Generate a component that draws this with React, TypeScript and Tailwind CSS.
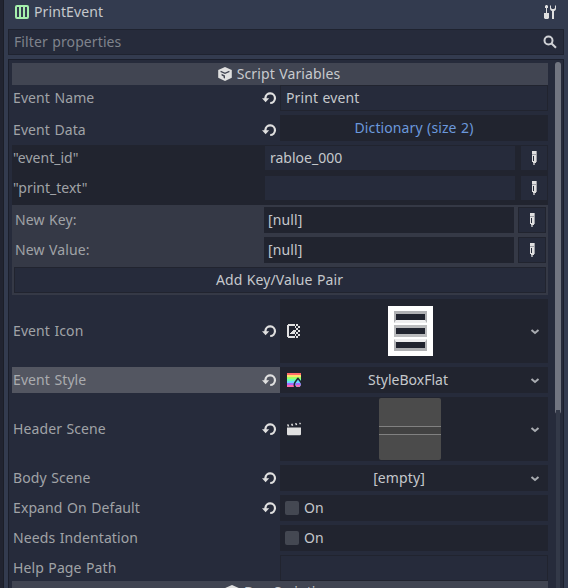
import type { ReactNode } from "react";

const ROW_LABEL = "flex h-[26px] shrink-0 items-center justify-between pl-px pr-[3px] text-[#a0a3a7]";

function Reset() {
  return (
    <svg width="16" height="16" viewBox="0 0 16 16" fill="none">
      <path d="M4.400 9V7.800a4.800 4.800 0 1 1 4.800 5.200" stroke="#e0e0e0" strokeWidth="2.200" />
      <path d="M1 8.300h7.200L4.600 12.300z" fill="#e0e0e0" />
    </svg>
  );
}

function Chevron() {
  return (
    <svg width="10" height="8" viewBox="0 0 10 8" fill="none" className="absolute right-2 top-1/2 -mt-[3px]">
      <path d="M1.500 2 5 5l3.500-3" stroke="#a9acb1" strokeWidth="2" />
    </svg>
  );
}

function Pencil() {
  return (
    <svg width="5" height="14" viewBox="0 0 5 14" shapeRendering="crispEdges">
      <path d="M0 0h4v3H0zM0 4h1v7H0zM2 4h2v7H2zM1 10h3v2H1zM1 4h1v1H1z" fill="#e0e0e0" />
      <path d="M0 3h4v1H0zM4 0h1v11H4zM1 12h2v2H1z" fill="#c4c6ca" opacity=".75" />
    </svg>
  );
}

function Cube() {
  return (
    <svg width="14" height="14" viewBox="0 0 14 14">
      <path d="M7 0 13.800 3v7.800L7 14 .200 10.800V3z" fill="#e0e0e0" />
      <path d="M2.600 4.300 7 6.300l4.400-2" fill="none" stroke="#414552" strokeWidth="1.300" />
      <path d="M3.600 6.800 7 8.400v3.200L5.600 11V9.500L3.600 8.500z" fill="#414552" />
    </svg>
  );
}

function TextureIcon() {
  return (
    <svg width="14" height="14" viewBox="0 0 14 14" shapeRendering="crispEdges" fill="#e0e0e0">
      <path d="M1 0h7v2H2v10h6v2H1v-1H0V1h1zM3 9h1V8h1V7h1V6h2v4H3zM8 2h1v2H8zM9 0h2v2H9zM11 2h2v2h-2zM9 4h2v2H9zM8 6h1v2H8zM11 6h2v2h-2zM9 8h2v2H9zM8 10h1v2H8zM11 10h2v2h-2zM9 12h2v2H9z" />
    </svg>
  );
}

function StyleIcon() {
  const bands = ["#ff6b6b", "#ffe46b", "#9bff6b", "#6bffb0", "#6bd9ff", "#a66bff", "#ff6bac"];
  return (
    <svg width="14" height="14" viewBox="0 0 14 14">
      {bands.map((color, i) => (
        <rect key={color} y={i * 2} width="14" height="2" fill={color} />
      ))}
      <path d="M7 14c-1.400-3 .500-6.200 4-9.800 1 1 2 2.300 3 3.800v6z" fill="#21242f" />
      <path d="M11 6.500c1.400 2 2.800 3.300 2.800 5a2.700 2.700 0 0 1-5.500 0c0-1.700 1.300-3 2.700-5z" fill="#6bd9ff" />
      <path d="M8.800 10h4.500l.500 2H8.400z" fill="#a66bff" />
      <path d="M8.500 12h5.200c-.500 1.400-1.400 2-2.700 2s-2.200-.700-2.500-2z" fill="#ff6bac" />
    </svg>
  );
}

function SceneIcon() {
  return (
    <svg width="14" height="13" viewBox="0 0 14 13" fill="#e0e0e0">
      <path d="M0 5h14v7l-1 1H1l-1-1zM0 2l1.500-.200L2.300 4H.700zM4 1.400 5.400 1l.900 2-1.500.400zM8 .800 9.400.500l.900 2-1.500.300zM12 .200l1.400-.200.600 1.600-1.200.300z" />
    </svg>
  );
}

function Header({ children }: { children: ReactNode }) {
  return (
    <div className="flex h-[22px] shrink-0 items-center justify-center gap-[5px] bg-[#414552] pr-0.5 text-[#c8cace]">
      <Cube />
      <span>{children}</span>
    </div>
  );
}

interface PropertyProps {
  label: string;
  reset?: boolean;
  highlighted?: boolean;
  tall?: boolean;
  children: ReactNode;
}

function Property({ label, reset, highlighted, tall, children }: PropertyProps) {
  return (
    <div className={`flex shrink-0 ${tall ? "h-16" : "h-[26px]"}`}>
      <div className={`flex w-[268px] items-center justify-between pl-px pr-[3px] ${highlighted ? "bg-[#535661] text-[#aaacaf]" : "text-[#a0a3a7]"}`}>
        <span>{label}</span>
        {reset && <Reset />}
      </div>
      {children}
    </div>
  );
}

function Picker({ icon, children, shift = "" }: { icon?: ReactNode; children: ReactNode; shift?: string }) {
  return (
    <div className="relative flex flex-1 items-center justify-center bg-[#21242f]">
      {icon && <span className="absolute left-[7px] top-1/2 -translate-y-1/2">{icon}</span>}
      <span className={shift}>{children}</span>
      <Chevron />
    </div>
  );
}

function Toggle() {
  return (
    <div className="flex flex-1 items-center gap-[5px] bg-[#21242f] pl-[5px]">
      <span className="size-3.5 rounded-[2px] bg-[#444852]" />
      <span>On</span>
    </div>
  );
}

function Entry({ name, value }: { name: string; value: string }) {
  return (
    <div className="flex h-[26px] items-center pr-px tracking-normal">
      <span className="w-[253px] pl-px text-[#a0a3a7]">{name}</span>
      <div className="flex h-6 w-[250px] items-center bg-[#262b3b] pl-[5px]">{value}</div>
      <div className="ml-1.5 flex h-6 w-[26px] items-center bg-[#262b3b] pl-[11px]">
        <Pencil />
      </div>
    </div>
  );
}

function NewEntry({ name }: { name: string }) {
  return (
    <div className="flex h-[26px] items-center">
      <span className="w-[250px] pl-px text-[#a0a3a7]">{name}</span>
      <div className="flex h-full w-[250px] items-center bg-[#21242f] pl-1">[null]</div>
      <div className="ml-1 flex h-full w-7 items-center border border-[#21242f] bg-[#262b3b] pl-[11px]">
        <Pencil />
      </div>
    </div>
  );
}

export default function App() {
  return (
    <div className="flex h-[588px] w-[568px] overflow-hidden bg-[#333b4f] font-['Noto_Sans',sans-serif] text-[14px] leading-5 tracking-[0.1px] whitespace-pre text-[#c5c8cc] [word-spacing:0.7px]">
      <div className="w-1 shrink-0 border-r border-[#1b1e28] bg-[#212431]" />
      <div className="flex h-full flex-1 flex-col px-1">
        <div className="flex h-[29px] shrink-0 items-center justify-between pb-[5px] pl-[7px] pr-2">
          <div className="flex items-center gap-[5px]">
            <svg width="14" height="14" viewBox="1 1 14 14">
              <path fill="#a5efac" d="M3 1a2 2 0 0 0-2 2v10a2 2 0 0 0 2 2h10a2 2 0 0 0 2-2V3a2 2 0 0 0-2-2zm0 2h2v10H3zm4 0h2v10H7zm4 0h2v10h-2z" />
            </svg>
            <span>PrintEvent</span>
          </div>
          <svg width="12" height="14" viewBox="0 0 12 14" fill="#e0e0e0">
            <path d="M2 0h1l1 1v2H3v5h2v5l-1 1H1l-1-1V8h2V3H1V1zM6 .5v3C6 5 7 5.8 8 6v8h2V6c1.200-.2 2-1 2-2.500v-3h-1V3l-1 1H8L7 3V.500z" />
          </svg>
        </div>
        <div className="flex h-[26px] shrink-0 items-center justify-between border border-[#1f2330] bg-[#262b3b] pl-[5px] pr-1.5 text-[#7f838c]">
          <span>Filter properties</span>
          <svg width="14" height="14" viewBox="0 0 14 14" fill="none" stroke="#d0d2d6" strokeWidth="2">
            <circle cx="5.500" cy="5.500" r="4" />
            <path d="m8.300 8.300 4.700 4.500" />
          </svg>
        </div>
        <div className="mt-1 flex min-h-0 flex-1 border border-b-0 border-[#1b1f2c] bg-[#262b3b] pl-[3px] pt-[3px]">
          <div className="flex w-[536px] shrink-0 flex-col overflow-hidden">
            <Header>Script Variables</Header>
            <Property label="Event Name" reset>
              <div className="flex flex-1 items-center border border-[#21242f] pl-[5px]">Print event</div>
            </Property>
            <div className="mt-1 flex h-[30px] shrink-0">
              <div className="w-[268px] pt-0.5">
                <div className={ROW_LABEL}>
                  <span>Event Data</span>
                  <Reset />
                </div>
              </div>
              <div className="flex h-[26px] flex-1 items-center justify-center bg-[#21242f] text-[#6b98dc]">Dictionary (size 2)</div>
            </div>
            <div className="flex h-[60px] shrink-0 flex-col gap-1 bg-[#21242f]">
              <Entry name={'"event_id"'} value="rabloe_000" />
              <Entry name={'"print_text"'} value="" />
            </div>
            <div className="flex h-[90px] shrink-0 flex-col gap-1 bg-[#353946] p-0.5">
              <NewEntry name="New Key:" />
              <NewEntry name="New Value:" />
              <div className="flex h-[26px] items-center justify-center border border-[#21242f] bg-[#262b3b] pr-px">Add Key/Value Pair</div>
            </div>
            <div className="mt-1 flex shrink-0 flex-col gap-1">
              <Property label="Event Icon" reset tall>
                <Picker icon={<TextureIcon />} shift="ml-[-7px]">
                  <span className="flex h-[50px] w-[45px] flex-col items-center bg-white pt-[5px]">
                    <span className="h-3 w-[33px] border-x-2 border-t-[3px] border-b-[3px] border-[#b0b1b4] border-b-[#eeeeef] bg-[#21242f]" />
                    <span className="mt-0.5 h-3 w-[33px] border-x-2 border-y-[3px] border-[#bbbcbe] bg-[#21242f]" />
                    <span className="mt-0.5 h-3 w-[33px] border-x-2 border-y-[3px] border-[#b0b1b4] border-t-[#eeeeef] bg-[#21242f]" />
                  </span>
                </Picker>
              </Property>
              <Property label="Event Style" reset highlighted>
                <Picker icon={<StyleIcon />} shift="ml-[-12px] tracking-normal">StyleBoxFlat</Picker>
              </Property>
              <Property label="Header Scene" reset tall>
                <Picker icon={<SceneIcon />} shift="ml-[-8px]">
                  <span className="flex size-[62px] items-center rounded-[2px] bg-[#4b4b4b]">
                    <span className="mt-[3px] h-[9px] w-full border-y border-[#818181] bg-[#424242]" />
                  </span>
                </Picker>
              </Property>
              <Property label="Body Scene" reset>
                <Picker shift="ml-[-30px]">[empty]</Picker>
              </Property>
              <Property label="Expand On Default" reset>
                <Toggle />
              </Property>
              <Property label="Needs Indentation">
                <Toggle />
              </Property>
              <Property label="Help Page Path">
                <div className="flex-1 border border-[#21242f]" />
              </Property>
            </div>
            <Header>Dev Scripting</Header>
          </div>
          <div className="ml-[7px] flex w-1.5 flex-col items-center">
            <div className="-mt-px h-[352px] w-full shrink-0 rounded-full bg-[#717580]" />
            <div className="-mt-1 w-1 flex-1 bg-[#333948]" />
          </div>
        </div>
      </div>
    </div>
  );
}
